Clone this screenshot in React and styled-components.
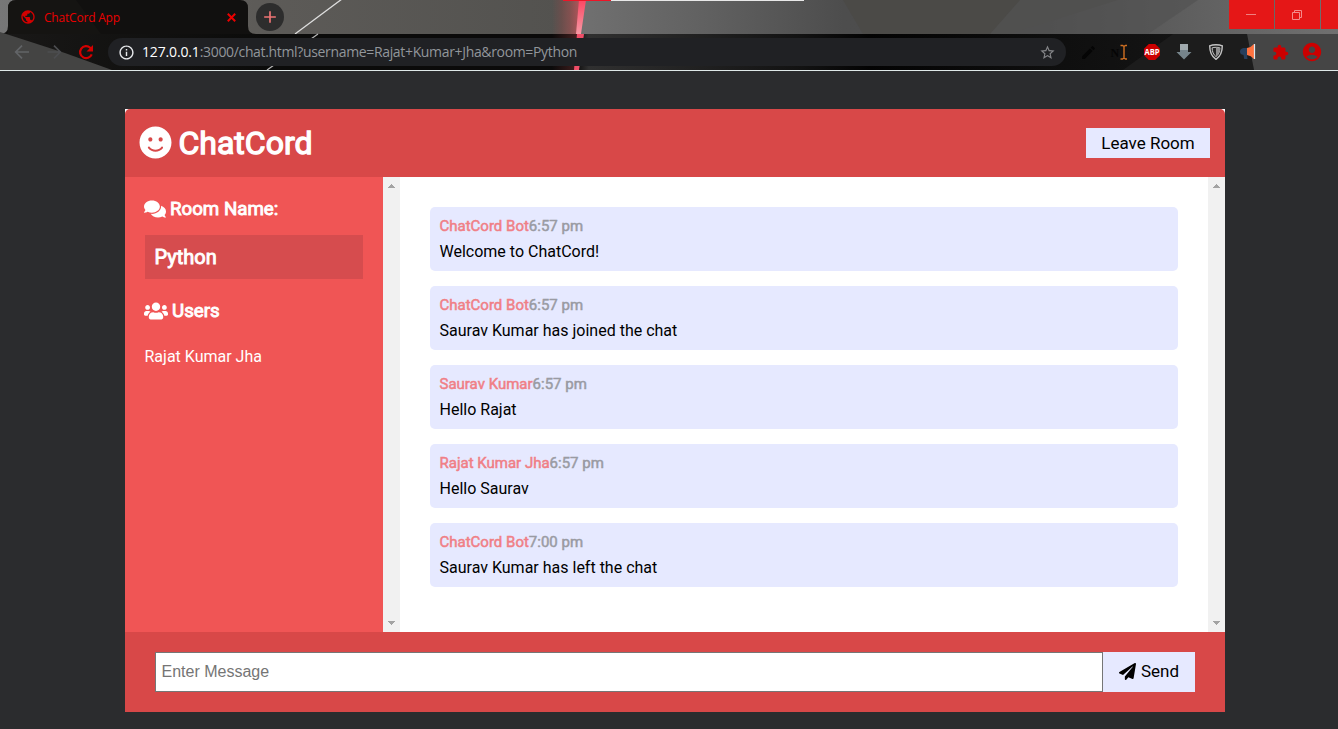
import React from 'react';
import styled, { createGlobalStyle } from 'styled-components';
import { FaSmile, FaComments, FaUsers, FaPaperPlane } from 'react-icons/fa';
import {
  MdPublic, MdAdd, MdInfoOutline, MdStarBorder, MdEdit, MdExtension, MdAccountCircle,
} from 'react-icons/md';

const Global = createGlobalStyle`
  * { box-sizing: border-box; margin: 0; padding: 0; }
  body { background: #2b2c2e; font-family: Roboto, sans-serif; font-size: 16px; overflow: hidden; }
  svg { display: block; flex: none; }
`;

const Window = styled.div`
  width: 1338px;
  height: 729px;
  display: flex;
  flex-direction: column;
  background: #2b2c2e;
`;

/* Browser frame */
const Chrome = styled.header`
  position: relative;
  height: 71px;
  border-bottom: 1px solid #dfe9e9;
  font-family: 'Open Sans', 'Noto Sans', sans-serif;
`;
const ThemeArt = styled.svg`
  position: absolute;
  inset: 0;
`;
const TabStrip = styled.div`
  position: relative;
  height: 34px;
  display: flex;
  align-items: flex-start;
`;
const Tab = styled.div`
  width: 240px;
  height: 34px;
  margin-left: 8px;
  padding: 0 10px 0 12px;
  display: flex;
  align-items: center;
  color: #ea0000;
`;
const TabTitle = styled.span`
  flex: 1;
  margin-left: 8px;
  font-size: 12px;
  letter-spacing: -0.2px;
  white-space: nowrap;
`;
const NewTab = styled.div`
  width: 28px;
  height: 28px;
  margin: 3px 0 0 8px;
  border-radius: 50%;
  background: #2d2d2d;
  color: #ee7474;
  display: flex;
  align-items: center;
  justify-content: center;
`;
const WindowButtons = styled.div`
  margin-left: auto;
  display: flex;
  gap: 1px;
`;
const WindowButton = styled.div`
  width: ${(p) => p.$width || 45}px;
  height: 29px;
  padding-right: 1px;
  background: #e51717;
  display: flex;
  align-items: center;
  justify-content: center;
`;
const Toolbar = styled.div`
  position: relative;
  height: 36px;
  padding: 0 14px 0 12px;
  display: flex;
  align-items: center;
`;
const NavButtons = styled.div`
  display: flex;
  gap: 12px;
`;
const AddressBar = styled.div`
  width: 958px;
  height: 28px;
  margin-left: 12px;
  padding: 0 10px 0 9.5px;
  border-radius: 14px;
  background: #202124;
  display: flex;
  align-items: center;
  color: #e8eaed;
`;
const Url = styled.span`
  flex: 1;
  margin: -1px 0 0 7.5px;
  font-size: 14px;
  letter-spacing: -0.34px;
  color: #92969b;
  white-space: nowrap;
`;
const Host = styled.span`
  color: #ffffff;
  letter-spacing: -0.15px;
`;
const Extensions = styled.div`
  margin-left: 12px;
  display: flex;
  align-items: center;
  gap: 12px;
`;
const ExtensionSlot = styled.div`
  width: 20px;
  height: 22px;
  display: flex;
  align-items: center;
  justify-content: center;
`;

/* Chat page */
const Page = styled.div`
  flex: 1;
  padding: 38px 0 0 125px;
`;
const ChatContainer = styled.div`
  width: 1100px;
  background: #ffffff;
`;
const ChatHeader = styled.div`
  height: 68px;
  padding: 0 15px 0 13.5px;
  border-radius: 5px 5px 0 0;
  background: #d84848;
  display: flex;
  align-items: center;
  justify-content: space-between;
`;
const Brand = styled.h1`
  height: 66px;
  margin-bottom: 2px;
  display: flex;
  align-items: center;
  gap: 7px;
  font-size: 32px;
  font-weight: 400;
  line-height: 40px;
  color: #ffffff;
  -webkit-text-stroke: 1.3px #ffffff;
`;
const BrandName = styled.span`
  margin-top: 2px;
`;
const LeaveButton = styled.button`
  width: 124px;
  height: 30px;
  border: 0;
  background: #e6e9ff;
  color: #000000;
  font: 17px Roboto, sans-serif;
`;
const Main = styled.main`
  height: 455px;
  display: flex;
`;
const Sidebar = styled.aside`
  width: 258px;
  padding: 20px 20px 0;
  background: #f05555;
  color: #ffffff;
`;
const SideHeading = styled.h3`
  height: 24px;
  margin-left: -1px;
  display: flex;
  align-items: center;
  gap: 4px;
  font-size: 18.72px;
  font-weight: 400;
  -webkit-text-stroke: 0.9px #ffffff;
`;
const RoomName = styled.h2`
  height: 44px;
  margin: 14px 0 20px;
  padding-left: 9.5px;
  background: #d64c4e;
  font-size: 20px;
  font-weight: 400;
  line-height: 45px;
  -webkit-text-stroke: 0.9px #ffffff;
`;
const UserList = styled.ul`
  margin: 23px 0 0 -0.5px;
  list-style: none;
  font-size: 16px;
  line-height: 22px;
`;
const ScrollTrack = styled.div`
  width: 17px;
  padding: 7px 5px;
  background: #f1f1f1;
  display: flex;
  flex-direction: column;
  justify-content: space-between;
`;
const Messages = styled.section`
  flex: 1;
  padding: 30px;
  display: flex;
  flex-direction: column;
  gap: 15px;
`;
const Message = styled.article`
  height: 64px;
  padding: 9px 9.5px 0;
  border-radius: 5px;
  background: #e6e9ff;
`;
const Meta = styled.p`
  font-size: 15px;
  line-height: 20px;
`;
const Author = styled.span`
  color: #f07f86;
  -webkit-text-stroke: 0.5px #f07f86;
`;
const Time = styled.span`
  color: #9a9ba3;
  -webkit-text-stroke: 0.5px #9a9ba3;
`;
const Body = styled.p`
  margin-top: 6px;
  font-size: 16px;
  line-height: 20px;
  color: #000000;
`;
const MessageForm = styled.form`
  height: 80px;
  padding: 20px 30px;
  background: #d84848;
  display: flex;
`;
const MessageInput = styled.input`
  flex: 1;
  height: 40px;
  padding: 0 5.5px 1px;
  border: 1px solid #767676;
  outline: 0;
  background: #ffffff;
  font: 16px 'Liberation Sans', Arial, sans-serif;
  &::placeholder { color: #757575; }
`;
const SendButton = styled.button`
  width: 92px;
  padding: 0 0 2px 0;
  border: 0;
  background: #e6e9ff;
  color: #000000;
  font: 17px Roboto, sans-serif;
  display: flex;
  align-items: center;
  justify-content: center;
  gap: 5px;
`;

const Artwork = () => (
  <ThemeArt width="1338" height="70" viewBox="0 0 1338 70">
    <defs>
      <linearGradient id="strip" x1="0" x2="1338" y1="0" y2="0" gradientUnits="userSpaceOnUse">
        <stop offset="0" stopColor="#777" />
        <stop offset="0.19" stopColor="#5d5b58" />
        <stop offset="0.42" stopColor="#53524f" />
        <stop offset="0.436" stopColor="#707070" />
        <stop offset="0.52" stopColor="#626262" />
        <stop offset="0.63" stopColor="#4d4d4d" />
        <stop offset="0.78" stopColor="#4b4b4b" />
        <stop offset="0.87" stopColor="#5c5c5c" />
        <stop offset="1" stopColor="#707070" />
      </linearGradient>
      <linearGradient id="bar" x1="0" x2="1338" y1="0" y2="0" gradientUnits="userSpaceOnUse">
        <stop offset="0" stopColor="#191817" />
        <stop offset="0.2" stopColor="#0b0b0a" />
        <stop offset="0.43" stopColor="#0b0a0a" />
        <stop offset="0.44" stopColor="#303030" />
        <stop offset="0.6" stopColor="#121212" />
        <stop offset="0.65" stopColor="#030303" />
        <stop offset="0.78" stopColor="#0e0e0e" />
        <stop offset="1" stopColor="#1b1b1b" />
      </linearGradient>
      <linearGradient id="glow" x1="552" x2="582" y1="0" y2="0" gradientUnits="userSpaceOnUse">
        <stop offset="0" stopColor="#a84444" stopOpacity="0" />
        <stop offset="0.6" stopColor="#a84444" stopOpacity="0.5" />
        <stop offset="1" stopColor="#e04a54" stopOpacity="0.7" />
      </linearGradient>
      <linearGradient id="beam" x1="0" x2="0" y1="0" y2="34" gradientUnits="userSpaceOnUse">
        <stop offset="0" stopColor="#fa4763" />
        <stop offset="1" stopColor="#f79aa5" />
      </linearGradient>
    </defs>
    <rect width="1338" height="34" fill="url(#strip)" />
    <path d="M843 0h275L1010 34H863Z" fill="#4b4a47" />
    <path d="M1020 0h178l-50 34h-158Z" fill="#525252" opacity=".7" />
    <path d="M550 0h32l-4 34h-28Z" fill="url(#glow)" />
    <path d="M579 0h7l-5 34h-5Z" fill="url(#beam)" />
    <path d="M342-1 295 34" stroke="#dedede" strokeWidth="1.3" />
    <rect y="34" width="1338" height="36" fill="url(#bar)" />
    <path d="M0 34q8 0 8-8V8q0-8 8-8h224q8 0 8 8v18q0 8 8 8Z" fill="#11100f" />
    <path d="M8 8q0-8 8-8h60l25 34H8Z" fill="#191816" opacity=".5" />
    <path d="M0 32 65 53 112 70H0Z" fill="#444443" />
    <path d="M318 34 267 70" stroke="#b8b8b8" strokeWidth="1.2" />
    <path d="M550 34h30l-3 36h-27Z" fill="url(#glow)" opacity=".5" />
    <path d="M577 34h7l-5 36h-5Z" fill="#ef4e68" />
    <path d="m1173 34-50 36h131l-7-36Z" fill="#1c1c1c" />
    <path d="M1247 34h91v36h-84Z" fill="#454545" />
    <path d="M563 .5h48" stroke="#ee1427" />
    <path d="M611 .5h193" stroke="#e8e8e8" />
  </ThemeArt>
);

const CloseIcon = () => (
  <svg width="13" height="13" viewBox="0 0 13 13">
    <path d="m2.800 2.800 7.400 7.400m0-7.400-7.400 7.400" stroke="currentColor" strokeWidth="2" />
  </svg>
);
const NavArrow = ({ forward, color }) => (
  <svg width="20" height="20" viewBox="0 0 20 20">
    <path
      d={forward ? 'M3.500 10h12.500M10 3.700l6.300 6.300-6.300 6.300' : 'M17 10H4.200M10 3.700 3.700 10l6.300 6.300'}
      fill="none"
      stroke={color}
      strokeWidth="1.700"
    />
  </svg>
);
const ReloadIcon = () => (
  <svg width="20" height="20" viewBox="0 0 20 20">
    <path d="M15.700 12.300A6 6 0 1 1 14.200 5.700L15.500 7" fill="none" stroke="#d40000" strokeWidth="2.200" />
    <path d="M17 3v6.500h-6.500Z" fill="#d40000" />
  </svg>
);
const RenameIcon = () => (
  <svg width="20" height="20" viewBox="0 0 20 20">
    <text x="0.500" y="14.500" fontFamily="Liberation Serif, serif" fontSize="12" fontWeight="700" fill="#050505">N</text>
    <path d="M10.500 3.500h2l1.500 1 1.500-1h1.500M14 4.500v12M10.500 17h2l1.500-1 1.500 1h1.500" stroke="#d07022" strokeWidth="1.400" fill="none" />
  </svg>
);
const AdblockIcon = () => (
  <svg width="20" height="20" viewBox="0 0 20 20">
    <path d="M6.800 2h6.400L18 6.700v6.600L13.200 18H6.800L2 13.300V6.700Z" fill="#cc0000" />
    <text x="10" y="13" textAnchor="middle" fontFamily="Open Sans, sans-serif" fontSize="8" fontWeight="700" fill="#fff" textLength="15" lengthAdjust="spacingAndGlyphs">ABP</text>
  </svg>
);
const DownloadIcon = () => (
  <svg width="20" height="20" viewBox="0 0 20 20">
    <path d="M6 2h8v8h3.500L10 17.500 2.500 10H6Z" fill="#76848b" />
    <path d="M6 2h8v6H6Z" fill="#9fa9ad" />
  </svg>
);
const ShieldIcon = () => (
  <svg width="20" height="20" viewBox="0 0 20 20">
    <path d="M10 2.700c2.300 0 4.500.3 6.300 1.100 0 6-1.600 10.600-6.300 13.500C5.300 14.400 3.700 9.800 3.700 3.800 5.500 3 7.700 2.700 10 2.700Z" fill="#242424" stroke="#c4c4c4" strokeWidth="1.400" />
    <path d="M10 5.300c1.400 0 2.700.2 3.900.6-.1 3.700-1.200 6.700-3.900 8.700-2.700-2-3.800-5-3.900-8.700 1.200-.4 2.500-.6 3.900-.6Z" fill="none" stroke="#c4c4c4" />
    <path d="M10 5.300v9.300c2.700-2 3.800-5 3.900-8.700Z" fill="#8e8e8e" />
  </svg>
);
const MegaphoneIcon = () => (
  <svg width="20" height="20" viewBox="0 0 20 20">
    <path d="M9 6H5.500Q2 6.500 2 9.500T5.500 13l.7 4h3.300L9 13Z" fill="#263f5d" />
    <path d="M9 6q4-.5 7-4v15q-3-3.500-7-4Z" fill="#ff7340" />
    <path d="M16.500 2v15" stroke="#dce8ef" strokeWidth="1.200" />
  </svg>
);

const Arrow = ({ down }) => (
  <svg width="7" height="4" viewBox="0 0 7 4" shapeRendering="crispEdges">
    <path d={down ? 'M0 0h7v1H6v1H5v1H4v1H3V3H2V2H1V1H0Z' : 'M3 0h1v1h1v1h1v1h1v1H0V3h1V2h1V1h1Z'} fill="#a3a3a3" />
  </svg>
);
const Scrollbar = () => (
  <ScrollTrack>
    <Arrow />
    <Arrow down />
  </ScrollTrack>
);

const extensions = [
  <MdEdit size={17} color="#050505" />,
  <RenameIcon />,
  <AdblockIcon />,
  <DownloadIcon />,
  <ShieldIcon />,
  <MegaphoneIcon />,
  <MdExtension size={17} color="#cc0000" />,
  <MdAccountCircle size={22} color="#cc0000" />,
];

const messages = [
  ['ChatCord Bot', '6:57 pm', 'Welcome to ChatCord!'],
  ['ChatCord Bot', '6:57 pm', 'Saurav Kumar has joined the chat'],
  ['Saurav Kumar', '6:57 pm', 'Hello Rajat'],
  ['Rajat Kumar Jha', '6:57 pm', 'Hello Saurav'],
  ['ChatCord Bot', '7:00 pm', 'Saurav Kumar has left the chat'],
];

export default function App() {
  return (
    <Window>
      <Global />
      <Chrome>
        <Artwork />
        <TabStrip>
          <Tab>
            <MdPublic size={16} color="#d40000" />
            <TabTitle>ChatCord App</TabTitle>
            <CloseIcon />
          </Tab>
          <NewTab><MdAdd size={20} /></NewTab>
          <WindowButtons>
            <WindowButton>
              <svg width="10" height="10" viewBox="0 0 10 10"><path d="M0 4.500h10" stroke="#f08080" /></svg>
            </WindowButton>
            <WindowButton>
              <svg width="10" height="10" viewBox="0 0 10 10"><path d="M.5 2.500h7v7h-7ZM2.500 2.500v-2h7v7h-2" fill="none" stroke="#f48b8b" /></svg>
            </WindowButton>
            <WindowButton $width={17} />
          </WindowButtons>
        </TabStrip>
        <Toolbar>
          <NavButtons>
            <NavArrow color="#626467" />
            <NavArrow forward color="#4c4d50" />
            <ReloadIcon />
          </NavButtons>
          <AddressBar>
            <MdInfoOutline size={17} />
            <Url><Host>127.0.0.1</Host>:3000/chat.html?username=Rajat+Kumar+Jha&amp;room=Python</Url>
            <MdStarBorder size={17} color="#858689" />
          </AddressBar>
          <Extensions>
            {extensions.map((icon, i) => <ExtensionSlot key={i}>{icon}</ExtensionSlot>)}
          </Extensions>
        </Toolbar>
      </Chrome>
      <Page>
        <ChatContainer>
          <ChatHeader>
            <Brand><FaSmile size={33} /><BrandName>ChatCord</BrandName></Brand>
            <LeaveButton>Leave Room</LeaveButton>
          </ChatHeader>
          <Main>
            <Sidebar>
              <SideHeading><FaComments size={22} />Room Name:</SideHeading>
              <RoomName>Python</RoomName>
              <SideHeading><FaUsers size={24} />Users</SideHeading>
              <UserList><li>Rajat Kumar Jha</li></UserList>
            </Sidebar>
            <Scrollbar />
            <Messages>
              {messages.map(([author, time, body]) => (
                <Message key={author + body}>
                  <Meta><Author>{author}</Author><Time>{time}</Time></Meta>
                  <Body>{body}</Body>
                </Message>
              ))}
            </Messages>
            <Scrollbar />
          </Main>
          <MessageForm>
            <MessageInput placeholder="Enter Message" />
            <SendButton type="button"><FaPaperPlane size={17} />Send</SendButton>
          </MessageForm>
        </ChatContainer>
      </Page>
    </Window>
  );
}
